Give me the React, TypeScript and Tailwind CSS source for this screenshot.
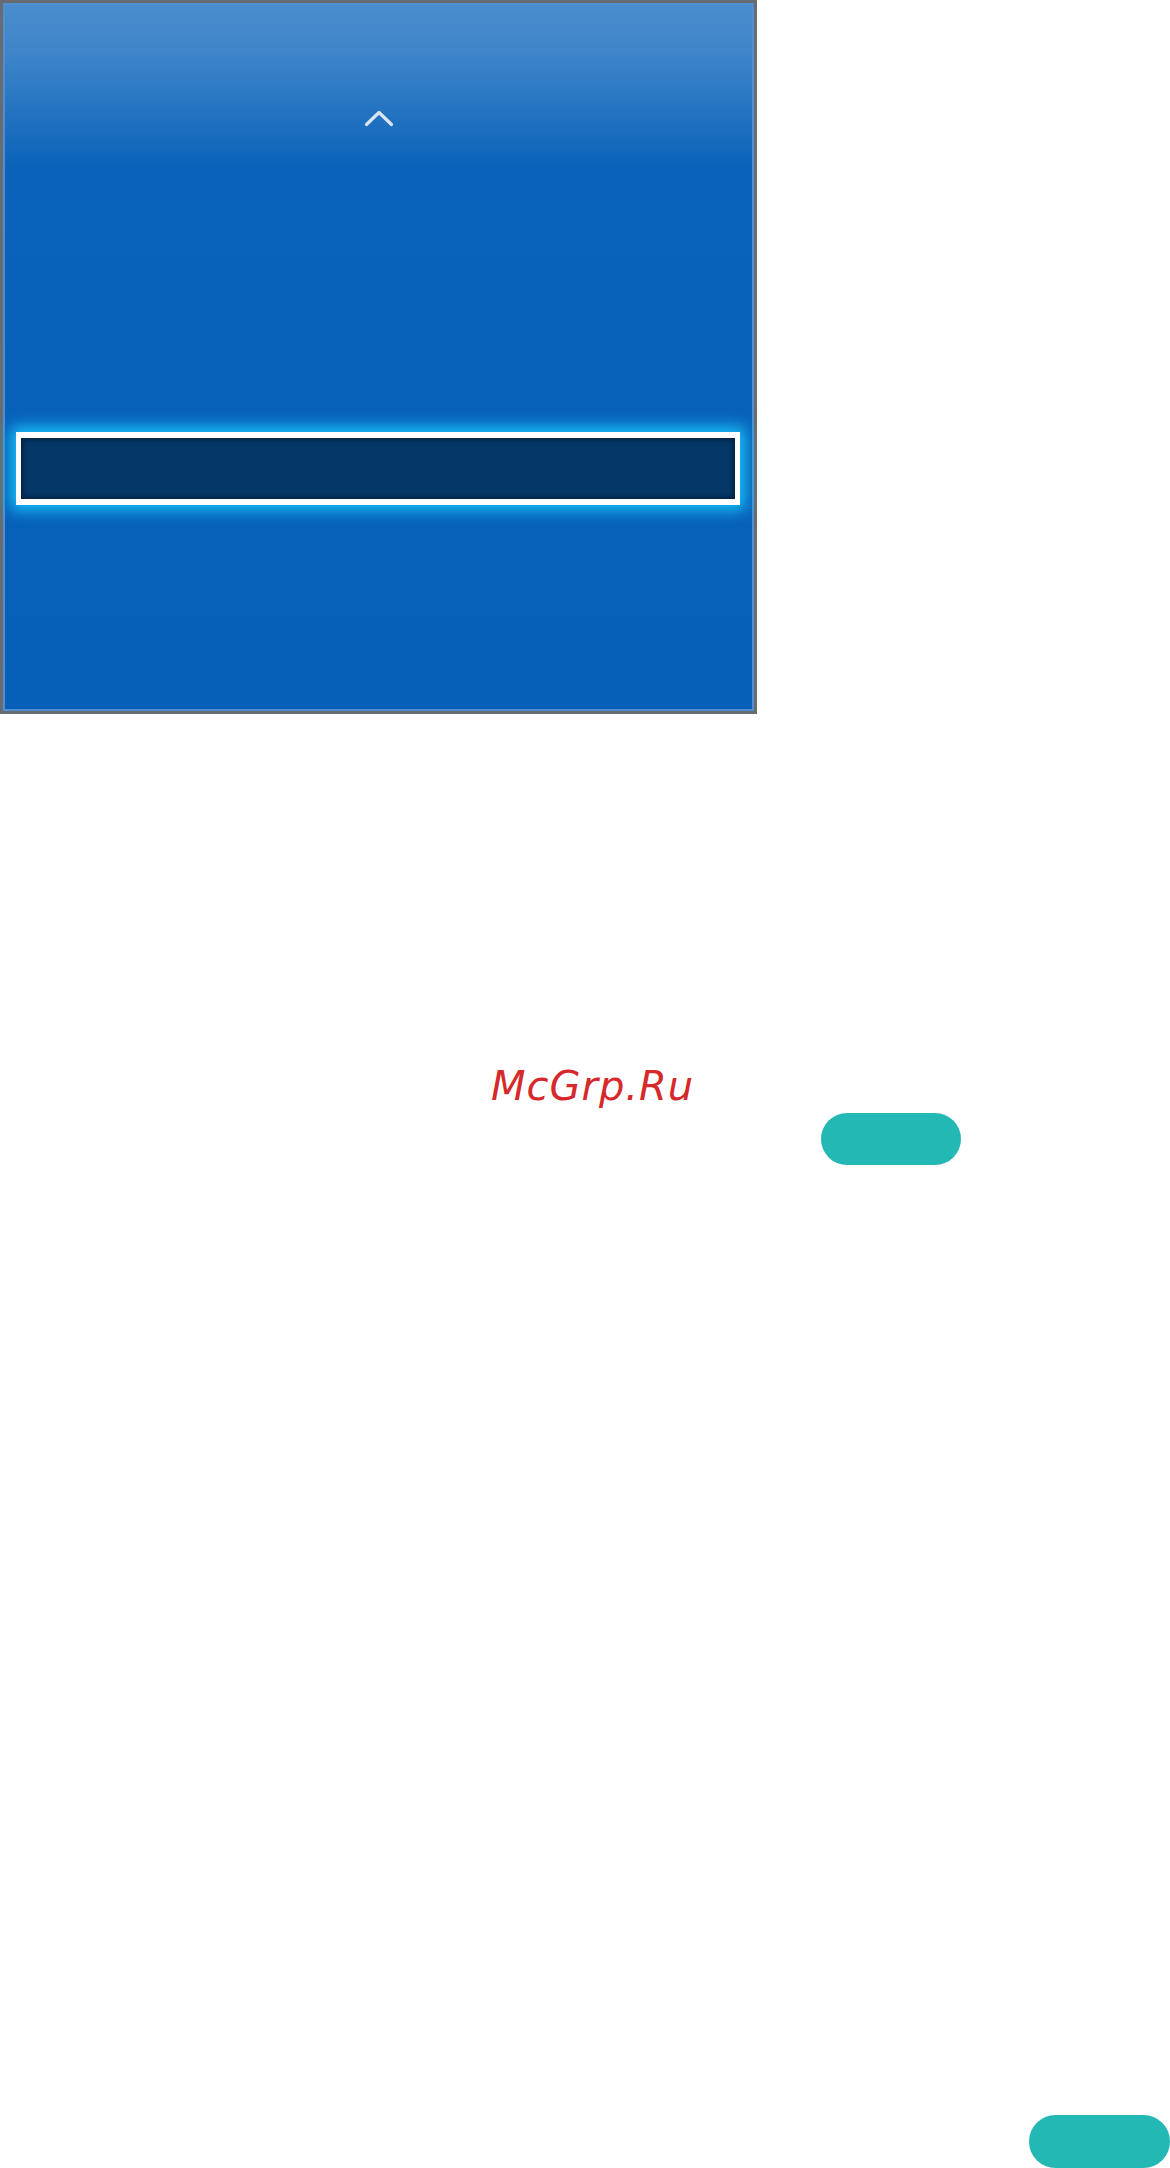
import React from 'react';

// Up chevron shown above the list
function ChevronUp() {
  return (
    <svg width="32" height="22" viewBox="0 0 32 22" fill="none" className="block">
      <path
        d="M3.5 18.5 L16 6.5 L28.5 18.5"
        stroke="#dbe5f0"
        strokeWidth="3.2"
        strokeLinecap="round"
        strokeLinejoin="round"
      />
    </svg>
  );
}

function ListPanel() {
  return (
    <div className="flex h-[714px] w-[757px] flex-col border-[3px] border-[#686b70] bg-[linear-gradient(to_bottom,#4b8dcd_0px,#3e85c9_50px,#2373c1_110px,#0a63b9_165px,#0660b8_100%)] shadow-[inset_0_0_0_2px_#4f8fd0]">
      <div className="flex justify-center pt-[103px]">
        <ChevronUp />
      </div>
      <div className="ml-[13px] mt-[304px] h-[73px] w-[724px] border-[6px] border-x-[5px] border-white bg-[#053767] shadow-[0_0_14px_5px_#1ac3fa,inset_0_0_4px_2px_#02213f]" />
    </div>
  );
}

export default function App() {
  return (
    <div className="flex h-[2168px] w-[1170px] flex-col bg-white font-['DejaVu_Sans',sans-serif]">
      <ListPanel />
      <p className="ml-[491px] mt-[352px] text-[40px] italic leading-none tracking-[1px] text-[#d5292b]">McGrp.Ru</p>
      <div className="ml-[821px] mt-[7px] h-[52px] w-[140px] rounded-full bg-[#24b8b4]" />
      <div className="mt-auto h-[53px] w-[141px] self-end rounded-full bg-[#24b8b4]" />
    </div>
  );
}
